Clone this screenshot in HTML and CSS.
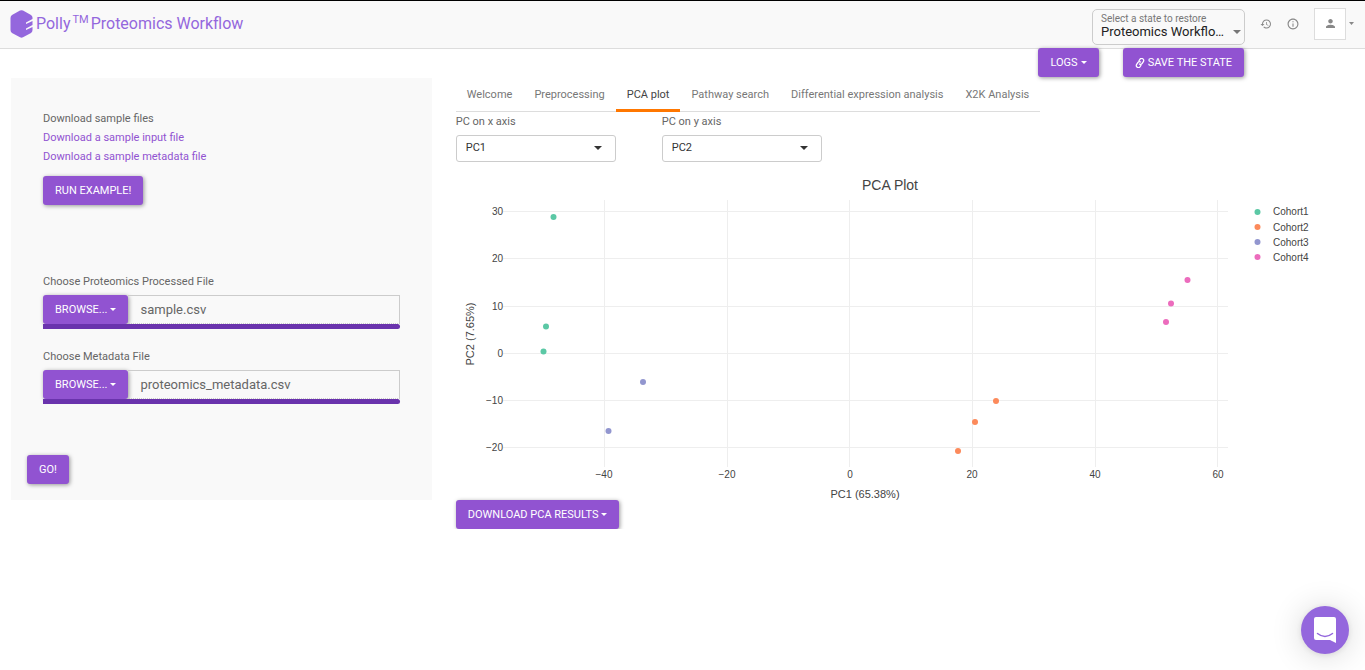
FILE: index.html
```html
<!DOCTYPE html>
<html lang="en">
<head>
    <meta charset="UTF-8">
    <meta name="viewport" content="width=device-width, initial-scale=1.0">
    <title>Polly Proteomics Workflow</title>
    <link rel="stylesheet" href="styles.css">
</head>
<body>
    <header class="topbar">
        <svg class="logo" width="23" height="28" viewBox="0 0 23 28" aria-hidden="true">
            <path d="M10 .5Q11.500 -.2 13 .5L21 5Q22.500 6 22.500 7.500V9L16 12.500V14L22.500 11V15L16 18.500V20L22.500 17V20Q22.500 22 21 23L13 27.300Q11.500 28 10 27.300L2 23Q.5 22 .5 20V8Q.5 6 2 5Z" fill="#9467dd"/>
        </svg>
        <h1 class="brand">Polly<sup>TM</sup>Proteomics Workflow</h1>

        <div class="state-picker">
            <label for="state">Select a state to restore</label>
            <select id="state">
                <option>Proteomics Workflow Demo</option>
            </select>
            <svg class="arrow" width="8" height="4" viewBox="0 0 8 4" aria-hidden="true"><path d="M0 0H8L4 4Z"/></svg>
        </div>
        <button class="icon-btn" aria-label="History">
            <svg width="12" height="12" viewBox="0 1 24 22"><path d="M13 3c-4.970 0-9 4.030-9 9H1l3.890 3.890.070.140L9 12H6c0-3.870 3.130-7 7-7s7 3.130 7 7-3.130 7-7 7c-1.930 0-3.680-.790-4.940-2.060l-1.420 1.420C8.270 19.990 10.510 21 13 21c4.970 0 9-4.030 9-9s-4.030-9-9-9zm-1 5v5l4.280 2.540.720-1.210-3.500-2.080V8H12z"/></svg>
        </button>
        <button class="icon-btn" aria-label="Information">
            <svg width="12" height="12" viewBox="1 1 22 22"><path d="M11 17h2v-6h-2v6zm1-15C6.480 2 2 6.480 2 12s4.480 10 10 10 10-4.480 10-10S17.520 2 12 2zm0 18c-4.410 0-8-3.590-8-8s3.590-8 8-8 8 3.590 8 8-3.590 8-8 8zM11 9h2V7h-2v2z"/></svg>
        </button>
        <button class="user" aria-label="Account">
            <span class="avatar">
                <svg width="9" height="9" viewBox="4 4 16 16"><path d="M12 12c2.210 0 4-1.790 4-4s-1.790-4-4-4-4 1.790-4 4 1.790 4 4 4zm0 2c-2.670 0-8 1.340-8 4v2h16v-2c0-2.660-5.330-4-8-4z"/></svg>
            </span>
            <svg width="5" height="3" viewBox="0 0 5 3"><path d="M0 0H5L2.500 3Z"/></svg>
        </button>
    </header>

    <div class="toolbar">
        <button class="btn">Logs<span class="caret"></span></button>
        <button class="btn">
            <svg width="10" height="10" viewBox="0 0 24 24" fill="none" stroke="currentColor" stroke-width="3" stroke-linecap="round"><g transform="rotate(-12 12 12)"><path d="M10 14a5 5 0 0 0 7 0l4-4a5 5 0 0 0-7-7l-3 3"/><path d="M14 10a5 5 0 0 0-7 0l-4 4a5 5 0 0 0 7 7l3-3"/></g></svg>
            Save the state
        </button>
    </div>

    <div class="page">
        <aside class="sidebar">
            <div class="samples">
                <p>Download sample files</p>
                <a href="#">Download a sample input file</a>
                <a href="#">Download a sample metadata file</a>
                <button class="btn">Run example!</button>
            </div>

            <div class="upload">
                <label for="processed">Choose Proteomics Processed File</label>
                <div class="file-row">
                    <button class="btn">Browse...<span class="caret"></span></button>
                    <input type="text" id="processed" value="sample.csv" readonly>
                </div>
                <div class="progress"></div>
            </div>

            <div class="upload">
                <label for="metadata">Choose Metadata File</label>
                <div class="file-row">
                    <button class="btn">Browse...<span class="caret"></span></button>
                    <input type="text" id="metadata" value="proteomics_metadata.csv" readonly>
                </div>
                <div class="progress"></div>
            </div>

            <button class="btn go">Go!</button>
        </aside>

        <main>
            <nav class="tabs">
                <a href="#">Welcome</a>
                <a href="#">Preprocessing</a>
                <a href="#" class="active">PCA plot</a>
                <a href="#">Pathway search</a>
                <a href="#">Differential expression analysis</a>
                <a href="#">X2K Analysis</a>
            </nav>

            <div class="axes">
                <div class="axis">
                    <label for="pcx">PC on x axis</label>
                    <select id="pcx">
                        <option>PC1</option>
                        <option>PC2</option>
                    </select>
                    <svg class="arrow" width="8" height="4" viewBox="0 0 8 4" aria-hidden="true"><path d="M0 0H8L4 4Z"/></svg>
                </div>
                <div class="axis">
                    <label for="pcy">PC on y axis</label>
                    <select id="pcy">
                        <option>PC2</option>
                        <option>PC1</option>
                    </select>
                    <svg class="arrow" width="8" height="4" viewBox="0 0 8 4" aria-hidden="true"><path d="M0 0H8L4 4Z"/></svg>
                </div>
            </div>

            <svg class="chart" viewBox="0 0 890 331" preserveAspectRatio="xMinYMin meet" role="img" aria-label="PCA Plot">
                <text class="chart-title" x="434" y="21">PCA Plot</text>

                <path class="grid" d="M148.500 31V298M271.500 31V298M393.500 31V298M516.500 31V298M639.500 31V298M761.500 31V298"/>
                <path class="grid" d="M47 42.500H772M47 89.500H772M47 137.500H772M47 184.500H772M47 231.500H772M47 278.500H772"/>

                <g class="ticks-y">
                    <text x="47" y="46">30</text>
                    <text x="47" y="93">20</text>
                    <text x="47" y="141">10</text>
                    <text x="47" y="188">0</text>
                    <text x="47" y="235">−10</text>
                    <text x="47" y="282">−20</text>
                </g>
                <g class="ticks-x">
                    <text x="148" y="309">−40</text>
                    <text x="271" y="309">−20</text>
                    <text x="394" y="309">0</text>
                    <text x="516" y="309">20</text>
                    <text x="639" y="309">40</text>
                    <text x="762" y="309">60</text>
                </g>
                <text class="axis-title" x="409" y="329">PC1 (65.38%)</text>
                <text class="axis-title" transform="translate(18 165) rotate(-90)">PC2 (7.65%)</text>

                <g class="cohort1">
                    <circle cx="97.500" cy="48" r="3"/>
                    <circle cx="90" cy="157.500" r="3"/>
                    <circle cx="87.500" cy="182.500" r="3"/>
                    <circle cx="801.500" cy="43" r="3"/>
                </g>
                <g class="cohort2">
                    <circle cx="540" cy="232" r="3"/>
                    <circle cx="519" cy="253" r="3"/>
                    <circle cx="502" cy="282" r="3"/>
                    <circle cx="801.500" cy="58" r="3"/>
                </g>
                <g class="cohort3">
                    <circle cx="187" cy="213" r="3"/>
                    <circle cx="152.500" cy="262" r="3"/>
                    <circle cx="801.500" cy="73" r="3"/>
                </g>
                <g class="cohort4">
                    <circle cx="731.500" cy="111" r="3"/>
                    <circle cx="715" cy="134.500" r="3"/>
                    <circle cx="710" cy="153" r="3"/>
                    <circle cx="801.500" cy="88" r="3"/>
                </g>
                <g class="legend">
                    <text x="817" y="46">Cohort1</text>
                    <text x="817" y="62">Cohort2</text>
                    <text x="817" y="77">Cohort3</text>
                    <text x="817" y="92">Cohort4</text>
                </g>
            </svg>

            <button class="btn">Download PCA results<span class="caret"></span></button>
        </main>
    </div>

    <button class="chat" aria-label="Open chat">
        <svg width="22" height="26" viewBox="0 0 22 26">
            <path d="M2 0H20Q22 0 22 2V26L16 23H2Q0 23 0 21V2Q0 0 2 0Z" fill="#fff"/>
            <path d="M3.500 16.500Q11 22.500 18.500 16.500" fill="none" stroke="#9467dd" stroke-width="1.500" stroke-linecap="round"/>
        </svg>
    </button>
</body>
</html>
```
FILE: styles.css
```css
* {
    box-sizing: border-box;
}

body {
    margin: 0;
    font-family: Roboto, "Liberation Sans", sans-serif;
    font-size: 11px;
    line-height: 19px;
    color: #666;
    background-color: #fff;
}

a {
    color: #9153d1;
    text-decoration: none;
}

button,
input,
select {
    font-family: inherit;
    font-size: 11px;
    margin: 0;
}

button {
    cursor: pointer;
}

.topbar {
    display: flex;
    align-items: center;
    height: 49px;
    padding: 0 11px 2px 10px;
    background-color: #f9f9f9;
    border-top: 1px solid #000;
    border-bottom: 1px solid #ddd;
}

.logo {
    margin-right: 3px;
}

.brand {
    flex: 1;
    margin: 0;
    font-size: 16px;
    font-weight: 400;
    color: #9467dd;
}

.brand sup {
    margin: 0 2px;
    font-size: 11px;
    line-height: 0;
}

.state-picker {
    position: relative;
    width: 153px;
    height: 36px;
    margin-top: 6px;
    margin-right: 15px;
    border: 1px solid #ccc;
    border-radius: 5px;
}

.state-picker label {
    display: block;
    padding: 3px 8px 0;
    font-size: 10px;
    line-height: 11px;
    color: #777;
}

.state-picker select {
    display: block;
    width: 100%;
    height: 15px;
    padding: 0 18px 0 8px;
    appearance: none;
    border: none;
    background: none;
    font-size: 13px;
    color: #222;
    overflow: hidden;
    text-overflow: ellipsis;
    white-space: nowrap;
}

.arrow {
    position: absolute;
    pointer-events: none;
    fill: #333;
}

.state-picker .arrow {
    right: 3px;
    bottom: 10px;
    fill: #777;
}

.icon-btn,
.user {
    display: flex;
    align-items: center;
    padding: 0;
    border: none;
    background: none;
    fill: #888;
}

.icon-btn {
    margin-right: 15px;
}

.user {
    gap: 3px;
}

.avatar {
    display: flex;
    align-items: center;
    justify-content: center;
    width: 32px;
    height: 32px;
    background-color: #fff;
    border: 1px solid #ddd;
}

.btn {
    display: inline-flex;
    align-items: center;
    height: 29px;
    padding: 0 12px;
    border: none;
    border-radius: 3px;
    background-color: #9153d1;
    box-shadow: 1px 1px 4px rgba(0, 0, 0, 0.4);
    color: #fff;
    text-transform: uppercase;
    white-space: nowrap;
}

.btn:hover {
    background-color: #6a33ad;
}

.btn svg {
    margin-right: 3px;
}

.caret {
    margin-left: 3px;
    border-top: 3px solid #fff;
    border-left: 3px solid transparent;
    border-right: 3px solid transparent;
}

.toolbar {
    display: flex;
    justify-content: flex-end;
    gap: 24px;
    height: 30px;
    margin-top: -1px;
    padding-right: 121px;
}

.page {
    display: grid;
    grid-template-columns: 319fr 681fr;
    align-items: start;
    gap: 24px;
    padding: 0 11px;
}

.sidebar {
    padding: 31px 16px 16px;
    background-color: #f9f9f9;
}

.samples {
    display: flex;
    flex-direction: column;
    align-items: flex-start;
    padding: 0 16px;
    margin-bottom: 67px;
}

.samples p {
    margin: 0;
}

.samples .btn {
    margin-top: 10px;
}

.upload {
    padding: 0 16px;
    margin-bottom: 18px;
}

.upload label {
    display: block;
    margin-bottom: 4px;
}

.file-row {
    display: flex;
}

.file-row input {
    flex: 1;
    min-width: 0;
    height: 29px;
    padding: 0 12px;
    border: 1px solid #ccc;
    border-left: none;
    border-bottom-style: dotted;
    background: none;
    font-size: 13px;
    color: #666;
}

/* keeps the bar above the button shadow */
.progress {
    position: relative;
    height: 5px;
    border-radius: 0 3px 3px 0;
    background-color: #6a33ad;
}

.go {
    margin-top: 33px;
}

main {
    min-width: 0;
}

.tabs {
    display: flex;
    width: max-content;
    border-bottom: 1px solid #ddd;
}

.tabs a {
    height: 34px;
    margin-bottom: -1px;
    padding: 7px 11px 0;
    color: #777;
}

.tabs a.active {
    color: #444;
    border-bottom: 3px solid #f70;
}

.axes {
    display: flex;
    gap: 46px;
    margin-bottom: 7px;
}

.axis {
    position: relative;
    width: 160px;
}

.axis label {
    display: block;
    margin-bottom: 4px;
}

.axis select {
    display: block;
    width: 100%;
    height: 27px;
    padding: 0 9px 2px;
    appearance: none;
    border: 1px solid #ccc;
    border-radius: 3px;
    background-color: #fff;
    color: #333;
}

.axis .arrow {
    right: 14px;
    bottom: 12px;
}

.chart {
    display: block;
    width: 100%;
    height: 331px;
    font-family: "Liberation Sans", Arial, sans-serif;
    font-size: 10px;
    fill: #444;
}

.chart-title {
    font-size: 14px;
    text-anchor: middle;
}

.axis-title {
    font-size: 11px;
    text-anchor: middle;
}

.grid {
    stroke: #eee;
}

.ticks-y {
    text-anchor: end;
}

.ticks-x {
    text-anchor: middle;
}

.cohort1 {
    fill: #5bc8a5;
}

.cohort2 {
    fill: #fc8a5b;
}

.cohort3 {
    fill: #9296cf;
}

.cohort4 {
    fill: #ec6cbd;
}

.chat {
    position: fixed;
    right: 16px;
    bottom: 16px;
    display: flex;
    align-items: center;
    justify-content: center;
    width: 48px;
    height: 48px;
    padding: 0;
    border: none;
    border-radius: 50%;
    background-color: #9467dd;
    box-shadow: 0 1px 6px rgba(0, 0, 0, 0.1), 0 2px 32px rgba(0, 0, 0, 0.16);
}
```
